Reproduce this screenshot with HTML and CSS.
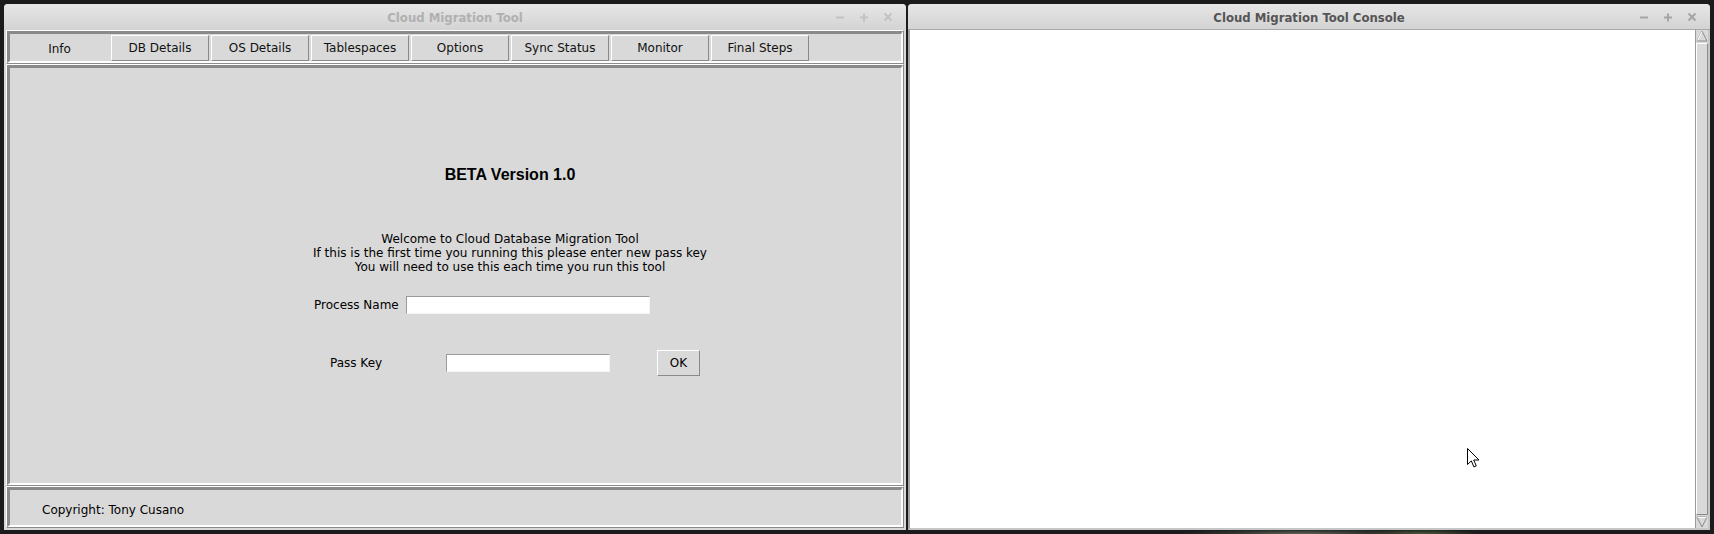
FILE: index.html
```html
<!DOCTYPE html>
<html>
<head>
<meta charset="utf-8">
<link rel="stylesheet" href="styles.css">
</head>
<body>
<div class="desktop">
  <div class="win win-left">
    <div class="titlebar inactive">
      <span class="title">Cloud Migration Tool</span>
      <div class="controls">
        <svg width="10" height="10" viewBox="0 0 10 10"><path d="M1 5.5h8" /></svg>
        <svg width="10" height="10" viewBox="0 0 10 10"><path d="M1 5.5h8M5 1.5v8" /></svg>
        <svg width="10" height="10" viewBox="0 0 10 10"><path d="M1.5 1.5l7 7M8.5 1.5l-7 7" /></svg>
      </div>
    </div>
    <div class="win-body">
      <div class="ridge tabs-frame">
        <div class="ridge-in tabs">
          <div class="tab tab-active">Info</div>
          <div class="tab">DB Details</div>
          <div class="tab">OS Details</div>
          <div class="tab">Tablespaces</div>
          <div class="tab">Options</div>
          <div class="tab">Sync Status</div>
          <div class="tab">Monitor</div>
          <div class="tab">Final Steps</div>
        </div>
      </div>
      <div class="ridge main-frame">
        <div class="ridge-in main">
          <div class="info">
            <div class="beta">BETA Version 1.0</div>
            <div class="welcome">Welcome to Cloud Database Migration Tool<br>If this is the first time you running this please enter new pass key<br>You will need to use this each time you run this tool</div>
            <div class="row row-process">
              <span class="lbl lbl-process">Process Name</span>
              <div class="entry entry-process"></div>
            </div>
            <div class="row row-pass">
              <span class="lbl lbl-pass">Pass Key</span>
              <div class="entry entry-pass"></div>
              <div class="btn-ok">OK</div>
            </div>
          </div>
        </div>
      </div>
      <div class="ridge footer-frame">
        <div class="ridge-in footer">Copyright: Tony Cusano</div>
      </div>
    </div>
  </div>

  <div class="win win-right">
    <div class="titlebar active">
      <span class="title">Cloud Migration Tool Console</span>
      <div class="controls">
        <svg width="10" height="10" viewBox="0 0 10 10"><path d="M1 5.5h8" /></svg>
        <svg width="10" height="10" viewBox="0 0 10 10"><path d="M1 5.5h8M5 1.5v8" /></svg>
        <svg width="10" height="10" viewBox="0 0 10 10"><path d="M1.5 1.5l7 7M8.5 1.5l-7 7" /></svg>
      </div>
    </div>
    <div class="console">
      <div class="textarea">
        <svg class="cursor" width="13" height="20" viewBox="0 0 13 20"><path d="M0.5 0.5v16l3.8-3.6 2.6 6 2.4-1-2.6-5.9h5.3z" fill="#fff" stroke="#000" stroke-width="1"/></svg>
      </div>
      <div class="scrollbar">
        <div class="arrow">
          <svg width="12" height="12" viewBox="0 0 12 12"><path d="M1 11L6 1l5 10z" fill="#d9d9d9" stroke="#8a8a8a"/><path d="M1.5 10.5L6 1.5" stroke="#fff"/></svg>
        </div>
        <div class="trough"></div>
        <div class="arrow">
          <svg width="12" height="12" viewBox="0 0 12 12"><path d="M1 1l5 10 5-10z" fill="#d9d9d9" stroke="#8a8a8a"/><path d="M1.5 1.5h9" stroke="#fff"/></svg>
        </div>
      </div>
    </div>
  </div>
</div>
</body>
</html>
```

FILE: styles.css
```css
html, body {
  margin: 0;
  padding: 0;
}
body {
  background: #1b1b1b;
  font-family: "DejaVu Sans", sans-serif;
  font-size: 12px;
  color: #000;
  width: 1714px;
  height: 534px;
  overflow: hidden;
}
.desktop {
  display: flex;
  gap: 2px;
  padding: 4px 0 0 4px;
  height: 534px;
  box-sizing: border-box;
  background:
    radial-gradient(ellipse 120px 6px at 1300px 534px, #5e6258 0%, rgba(60, 64, 56, 0.6) 60%, rgba(27, 27, 27, 0) 100%),
    radial-gradient(ellipse 60px 5px at 1420px 534px, #4a5a3c 0%, rgba(27, 27, 27, 0) 100%),
    #1b1b1b;
}
.win {
  height: 526px;
  display: flex;
  flex-direction: column;
  border-radius: 4px 4px 0 0;
  background: #d9d9d9;
}
.win-left {
  width: 902px;
}
.win-right {
  width: 802px;
}
.titlebar {
  height: 26px;
  flex: none;
  box-sizing: border-box;
  display: grid;
  grid-template-columns: 1fr auto 1fr;
  align-items: center;
  background: linear-gradient(#e6e6e6, #d3d3d3);
  border-radius: 4px 4px 0 0;
}
.titlebar.active {
  border-bottom: 1px solid #a9a9a9;
}
.title {
  grid-column: 2;
  font-family: "DejaVu Sans Condensed", "DejaVu Sans", sans-serif;
  font-stretch: condensed;
  font-weight: bold;
  font-size: 13px;
  padding-top: 1px;
}
.inactive .title {
  color: #b0b0b0;
}
.active .title {
  color: #555;
  padding-top: 2px;
}
.controls {
  grid-column: 3;
  justify-self: end;
  display: flex;
  gap: 14px;
  padding-right: 13px;
}
.controls svg path {
  stroke-width: 2;
  fill: none;
}
.inactive .controls svg path {
  stroke: #c2c2c2;
}
.active .controls svg path {
  stroke: #a5a5a5;
}
.win-body {
  flex: 1;
  display: flex;
  flex-direction: column;
  padding: 0 2px 2px 2px;
}
.ridge {
  border: 1px solid;
  border-color: #fff #8a8a8a #8a8a8a #fff;
  box-sizing: border-box;
  display: flex;
}
.ridge-in {
  flex: 1;
  border-style: solid;
  border-width: 3px 2px 2px 3px;
  border-color: #8a8a8a #fff #fff #8a8a8a;
  background: #d9d9d9;
}
.tabs-frame {
  height: 34px;
}
.tabs {
  display: flex;
  gap: 2px;
  padding-top: 1px;
}
.tab {
  box-sizing: border-box;
  width: 98px;
  height: 26px;
  border: 1px solid;
  border-color: #fff #8a8a8a #8a8a8a #fff;
  display: flex;
  align-items: center;
  justify-content: center;
  color: #111;
}
.tab-active {
  width: 99px;
  border: none;
  padding-top: 2px;
}
.main-frame {
  height: 422px;
}
.info {
  width: 400px;
  margin-left: 300px;
  margin-top: 97px;
  display: flex;
  flex-direction: column;
}
.beta {
  text-align: center;
  font-family: "Liberation Sans", Arial, sans-serif;
  font-weight: bold;
  font-size: 16px;
  line-height: 20px;
}
.welcome {
  margin-top: 47px;
  text-align: center;
  line-height: 14px;
}
.row {
  display: flex;
  align-items: center;
}
.row-process {
  margin-top: 22px;
  height: 18px;
}
.row-pass {
  margin-top: 36px;
  height: 26px;
}
.lbl-process {
  margin-left: 4px;
  width: 92px;
}
.lbl-pass {
  margin-left: 20px;
  width: 116px;
}
.entry {
  box-sizing: border-box;
  height: 18px;
  background: #fff;
  border: 1px solid;
  border-color: #9a9a9a #f4f4f4 #f4f4f4 #9a9a9a;
}
.entry-process {
  width: 244px;
}
.entry-pass {
  width: 164px;
}
.btn-ok {
  box-sizing: border-box;
  margin-left: 47px;
  width: 43px;
  height: 26px;
  border: 1px solid;
  border-color: #fff #8a8a8a #8a8a8a #fff;
  display: flex;
  align-items: center;
  justify-content: center;
}
.footer-frame {
  height: 42px;
}
.footer {
  display: flex;
  align-items: center;
  padding-left: 32px;
  padding-top: 5px;
}
.console {
  flex: 1;
  display: flex;
  border-style: solid;
  border-width: 0 2px 2px 2px;
  border-color: #b4b4b4 #c6c6c6 #c6c6c6 #a4a4a4;
}
.textarea {
  flex: 1;
  background: #fff;
  position: relative;
}
.cursor {
  position: absolute;
  left: 557px;
  top: 418px;
}
.scrollbar {
  width: 12px;
  display: flex;
  flex-direction: column;
  background: #d9d9d9;
  border-left: 1px solid #9a9a9a;
}
.arrow {
  height: 12px;
  display: flex;
}
.trough {
  flex: 1;
  border: 1px solid;
  border-color: #fff #8a8a8a #8a8a8a #fff;
  margin: 1px 0;
}
```
